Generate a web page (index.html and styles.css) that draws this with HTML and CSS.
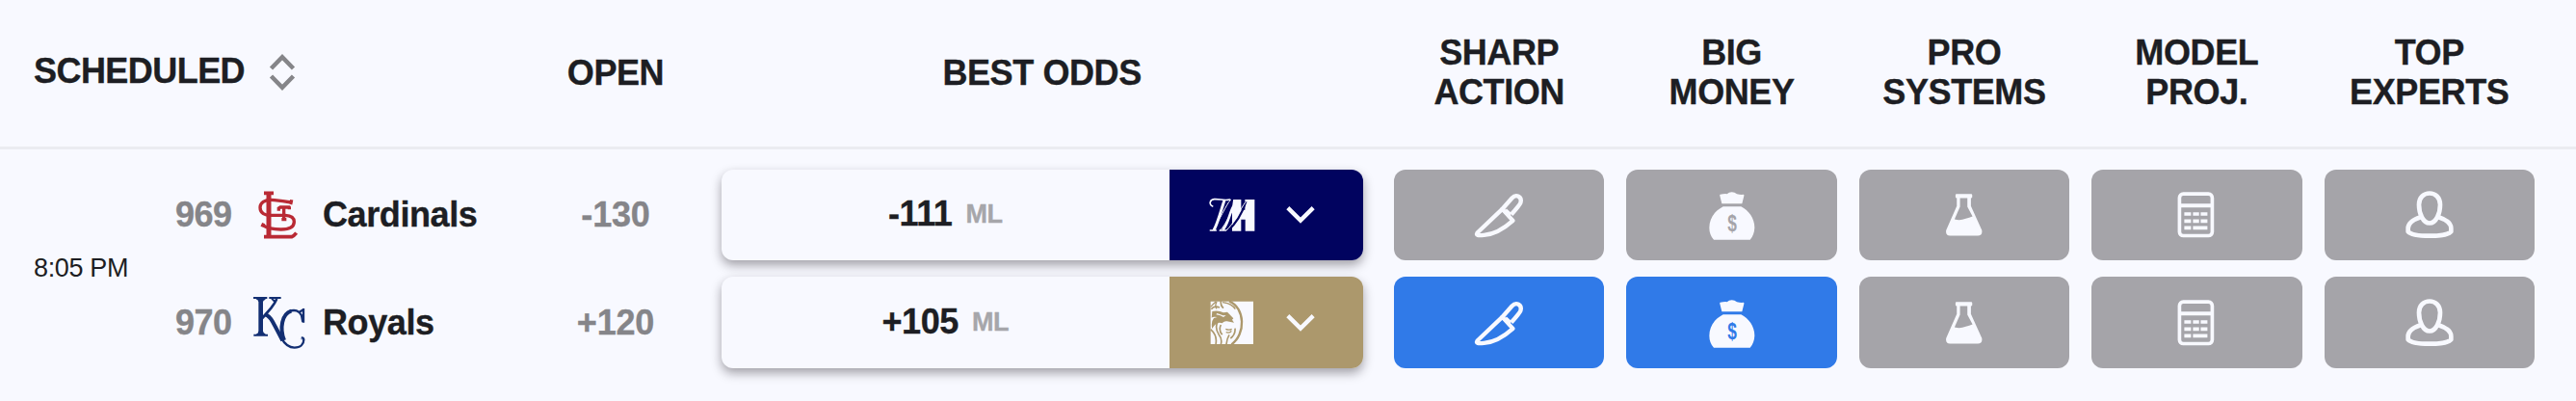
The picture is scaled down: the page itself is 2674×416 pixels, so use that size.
FILE: index.html
```html
<!DOCTYPE html>
<html lang="en">
<head>
<meta charset="utf-8">
<title>Best odds</title>
<link rel="stylesheet" href="styles.css">
</head>
<body>
<svg class="defs" width="0" height="0" aria-hidden="true">
  <symbol id="knife" viewBox="78.6 38.4 180 180">
    <g fill="none" stroke="currentColor" stroke-width="13" stroke-linejoin="round">
      <path d="M179 110L101 184C96 192 103 193 122 191Q165 188 212 146L179 110"/>
      <path d="M178 111L209 76C222 62 241 71 236 90C234 96 222 110 207 127"/>
      <path d="M188 114L204 129"/>
    </g>
  </symbol>
  <symbol id="bag" viewBox="83 38.4 180 180">
    <path fill="currentColor" d="M136 65Q148 62 157 63Q163 57 172 57Q181 57 188 63Q198 66 208 65Q211 66 210 69L204 93H141L135 69Q134 66 136 65ZM145 102H201C225 115 243 138 243 168Q242 190 229 206H116Q102 190 102 168C102 138 120 115 145 102Z"/>
  </symbol>
  <symbol id="flask" viewBox="87.3 38.4 180 180">
    <path fill="currentColor" fill-rule="evenodd" d="M153 63H199Q202 63 202 66V73Q202 76 198 76V101L232 176Q235 193 219 193H133Q118 192 121 176L154 101V76Q150 76 150 73V66Q150 63 153 63ZM164 76V103L147 142Q164 147 182 140Q193 137 203 133L187 103V76Z"/>
  </symbol>
  <symbol id="calc" viewBox="91.8 38.4 180 180">
    <rect x="129" y="63" width="102" height="130" rx="12" fill="none" stroke="currentColor" stroke-width="11"/>
    <path fill="currentColor" d="M129 93H231V105H129ZM144 120H165V131H144ZM171 120H190V131H171ZM195 120H216V131H195ZM144 142H165V153H144ZM171 142H190V153H171ZM195 142H216V153H195ZM144 163H165V174H144ZM171 163H216V174H171Z"/>
  </symbol>
  <symbol id="expert" viewBox="96 38.4 180 180">
    <g fill="none" stroke="currentColor" stroke-width="14">
      <path d="M186 61C203 61 219 73 219 96C219 122 207 154 186 154C165 154 153 122 153 96C153 73 169 61 186 61Z"/>
      <path stroke-linejoin="round" d="M158 135C137 142 119 152 119 170V180C134 198 238 198 253 180V170C253 152 235 142 214 135"/>
    </g>
  </symbol>
  <symbol id="chevron" viewBox="389.5 101 120 120">
    <path fill="none" stroke="currentColor" stroke-width="13" d="M410 139L449.500 178L489 139"/>
  </symbol>
</svg>

<div class="board">
  <header class="row head">
    <div class="head-scheduled">
      <span class="scheduled">SCHEDULED</span>
      <svg class="sort" viewBox="0 0 28 40"><path d="M2.500 16L14 4.200L25.500 16M2.500 24L14 35.800L25.500 24"/></svg>
    </div>
    <div class="label">OPEN</div>
    <div class="label">BEST ODDS</div>
    <div class="signals">
      <div class="label">SHARP<br>ACTION</div>
      <div class="label">BIG<br>MONEY</div>
      <div class="label">PRO<br>SYSTEMS</div>
      <div class="label">MODEL<br>PROJ.</div>
      <div class="label">TOP<br>EXPERTS</div>
    </div>
  </header>

  <main class="row game">
    <div class="schedule">
      <div class="time">8:05 PM</div>
      <div class="teams">
        <div class="team">
          <span class="rotation">969</span>
          <svg class="team-logo stl" viewBox="57 38 180 180">
            <g fill="none" stroke="#b92a35">
              <path stroke-width="15" d="M117 58V196"/>
              <path stroke-width="11" d="M102 60H132M102 196H188Q196 193 203 184"/>
              <path stroke-width="10" d="M185 95Q187 88 188 81M187 89Q160 85 135 82C101 78 90 92 90 105C90 122 104 130 127 129H168C188 130 196 138 196 149C196 166 180 173 155 173C131 173 113 170 98 160M96 165L101 154"/>
              <path stroke-width="10" d="M145 109L153 104H184M164 105V145M148 115V105M181 102V111M157 142H172"/>
            </g>
          </svg>
          <span class="name">Cardinals</span>
        </div>
        <div class="team">
          <span class="rotation">970</span>
          <svg class="team-logo kc" viewBox="57 374 180 180">
            <g fill="none" stroke="#132f73">
              <path stroke-width="14" d="M92 388V500"/>
              <path stroke-width="6" d="M69 386H112M118 386H155M70 502H114M79 388Q88 390 88 398M106 388Q97 390 96 398M79 501Q88 498 88 490M106 501Q97 498 96 490M126 388L136 398"/>
              <path stroke-width="8" d="M142 389Q136 403 124 418L97 449"/>
              <path stroke-width="12" d="M106 438Q119 442 129 460Q148 495 160 519"/>
              <path stroke-width="7" d="M156 511C167 531 180 541 197 541C216 541 226 530 226 516Q225 509 219 511"/>
              <path stroke-width="12" d="M165 518C150 480 158 436 187 427"/>
              <path stroke-width="7" d="M180 429C198 420 212 427 219 441L223 461M225 419V463M212 430L226 422"/>
              <circle cx="220" cy="513" r="3"/>
            </g>
          </svg>
          <span class="name">Royals</span>
        </div>
      </div>
    </div>

    <div class="stack">
      <div class="open">-130</div>
      <div class="open">+120</div>
    </div>

    <div class="stack">
      <div class="odds">
        <div class="price"><span>-111</span><span class="unit">ML</span></div>
        <div class="book navy">
          <svg class="book-logo" viewBox="148 69 180 180">
            <path fill="currentColor" d="M238 111H266V143H278V111H308V209H279V173H266V209H238Z"/>
            <g fill="none" stroke="#01035f" stroke-width="7"><path d="M238 111Q232 170 206 207M281 117Q263 174 224 209"/></g>
            <g fill="none" stroke="currentColor" stroke-linecap="round">
              <path stroke-width="5" d="M177 132C165 126 168 112 182 110C198 108 213 116 231 111M170 207H188M200 207H218"/>
              <path stroke-width="9" d="M213 116C207 132 197 174 183 203"/>
              <path stroke-width="3" d="M233 112C220 125 197 180 177 207M257 121C238 137 221 187 201 207M281 117C262 142 243 188 220 207"/>
              <path stroke-width="8" d="M241 134C231 151 227 183 211 203"/>
            </g>
          </svg>
          <svg class="chevron"><use href="#chevron"/></svg>
        </div>
      </div>
      <div class="odds">
        <div class="price"><span>+105</span><span class="unit">ML</span></div>
        <div class="book gold">
          <svg class="book-logo" viewBox="148 405 180 180">
            <path fill="currentColor" d="M171 428H304V561H171Z"/>
            <g fill="none" stroke="#ac986c">
              <path stroke-width="7" d="M229 428C279 448 281 530 236 562"/>
              <path stroke-width="4" d="M208 431Q237 434 248 452M171 445Q181 434 188 428M190 429Q183 442 190 451"/>
              <path stroke-width="5" d="M203 426Q201 440 211 449M173 452Q182 440 199 447"/>
              <path stroke-width="5" d="M171 515Q193 535 187 561M192 494Q184 511 196 530Q208 545 203 561M203 501Q195 517 207 532M229 532Q222 543 220 561M247 512Q249 531 233 543"/>
              <path stroke-width="4" d="M218 514Q229 519 237 514M219 524Q231 528 236 520"/>
            </g>
            <path fill="#ac986c" d="M176 459Q194 454 211 463L223 461L242 481L238 485L244 494L222 490Q213 489 207 496Q193 489 180 506L176 513Q171 492 181 480L192 477Q179 474 174 479Z"/>
            <path fill="currentColor" d="M191 465L210 472L219 471L211 477Q202 471 188 469Z"/>
          </svg>
          <svg class="chevron"><use href="#chevron"/></svg>
        </div>
      </div>
    </div>

    <div class="signals">
      <div class="signal"><svg><use href="#knife"/></svg></div>
      <div class="signal"><svg viewBox="0 0 60 60"><use href="#bag" width="60" height="60"/><text class="bag-sign" transform="translate(30 47.200) scale(.72 1)" text-anchor="middle">$</text></svg></div>
      <div class="signal"><svg><use href="#flask"/></svg></div>
      <div class="signal"><svg><use href="#calc"/></svg></div>
      <div class="signal"><svg><use href="#expert"/></svg></div>
      <div class="signal active"><svg><use href="#knife"/></svg></div>
      <div class="signal active"><svg viewBox="0 0 60 60"><use href="#bag" width="60" height="60"/><text class="bag-sign" transform="translate(30 47.200) scale(.72 1)" text-anchor="middle">$</text></svg></div>
      <div class="signal"><svg><use href="#flask"/></svg></div>
      <div class="signal"><svg><use href="#calc"/></svg></div>
      <div class="signal"><svg><use href="#expert"/></svg></div>
    </div>
  </main>
</div>
</body>
</html>
```

FILE: styles.css
```css
* { box-sizing: border-box; }

body {
  margin: 0;
  background: #f8f9ff;
  color: #1d1e23;
  font-family: "Liberation Sans", Arial, sans-serif;
  font-size: 36px;
  font-weight: 700;
  -webkit-text-stroke: .35px currentColor;
}

.defs { display: block; }
.board { height: 416px; overflow: hidden; }

.row {
  display: grid;
  grid-template-columns: 494.5px 219px 666.2px 1184.3px;
  padding-left: 35px;
}

.head {
  height: 155px;
  padding-bottom: 2px;
  align-items: center;
  border-bottom: 3px solid #ebecf1;
  line-height: 41px;
}

.head-scheduled { display: flex; align-items: center; gap: 24.5px; }
.scheduled { padding-bottom: 4px; letter-spacing: -.55px; }
.sort {
  width: 28px;
  height: 40px;
  fill: none;
  stroke: #858589;
  stroke-width: 4.5;
}
.label { text-align: center; letter-spacing: -.4px; }

.signals {
  display: grid;
  grid-template-columns: repeat(5, 218.4px);
  column-gap: 23px;
  row-gap: 17.4px;
  margin-left: 32.3px;
}

.game { padding-top: 20.5px; }
.schedule { display: grid; grid-template-columns: 147px 1fr; align-items: center; }
.time {
  font-size: 27px;
  font-weight: 400;
  letter-spacing: -.35px;
  -webkit-text-stroke-width: 0;
}
.teams, .stack { display: grid; grid-template-rows: repeat(2, 94.6px); row-gap: 17.4px; }
.team { display: flex; align-items: center; }
.rotation { width: 60px; color: #858589; letter-spacing: -.5px; }
.team-logo { width: 60px; height: 60px; margin-left: 17px; margin-right: 16px; }
.name { letter-spacing: -.4px; }
.open { display: flex; align-items: center; justify-content: center; color: #858589; letter-spacing: -.2px; }

.odds {
  display: flex;
  border-radius: 12px;
  background: #f8f9ff;
  box-shadow: 0 5px 11px rgba(20, 16, 24, .38);
}
.price {
  flex: 1;
  display: flex;
  align-items: center;
  justify-content: center;
  gap: 14px;
  padding-bottom: 1px;
  letter-spacing: -.4px;
}
.unit { font-size: 27px; color: #a6a6aa; }
.book {
  width: 200.5px;
  display: flex;
  align-items: center;
  gap: 20.5px;
  padding-left: 35px;
  border-radius: 0 12px 12px 0;
  color: #f8f9ff;
}
.navy { background: #01035f; }
.gold { background: #ac986c; }
.book-logo { width: 60px; height: 60px; }
.chevron { width: 40px; height: 40px; }

.signal {
  height: 94.6px;
  display: flex;
  align-items: center;
  justify-content: center;
  border-radius: 12px;
  background: #a5a4a9;
  color: #f8f9ff;
}
.signal svg { width: 60px; height: 60px; }
.signal.active { background: #307ae8; }
.bag-sign { fill: #a5a4a9; font-size: 24px; font-weight: 700; -webkit-text-stroke-width: 0; }
.active .bag-sign { fill: #307ae8; }
```
